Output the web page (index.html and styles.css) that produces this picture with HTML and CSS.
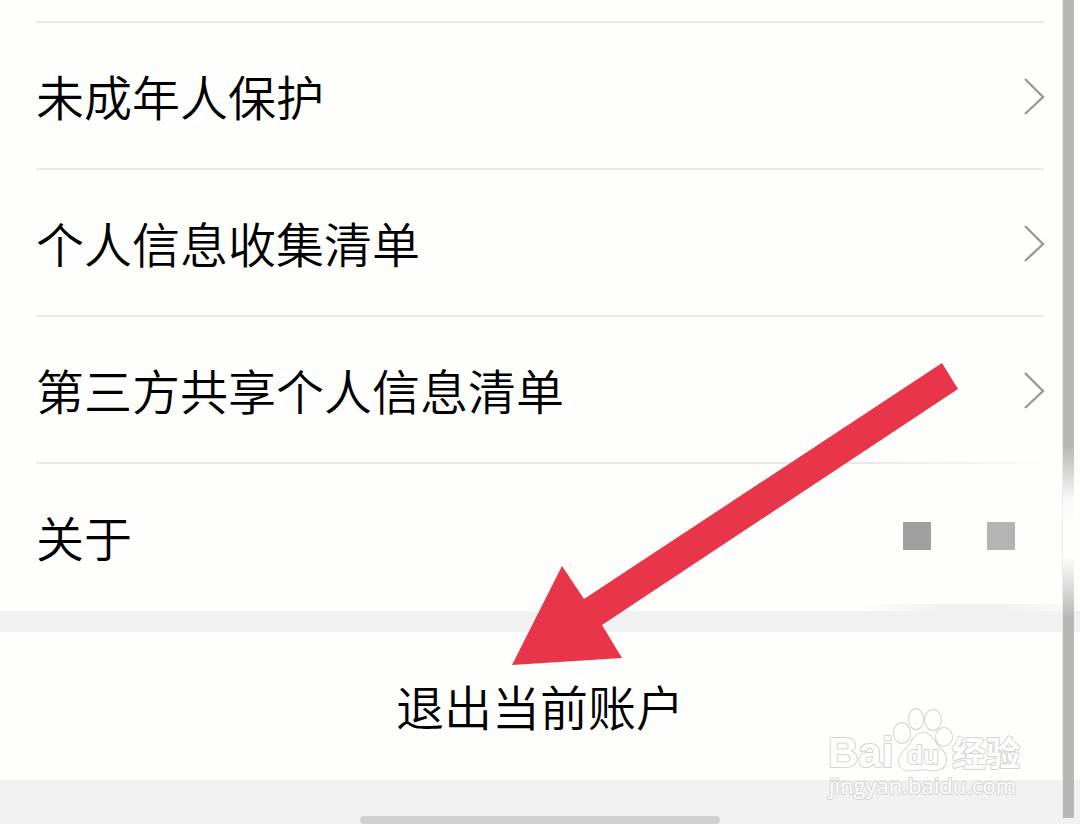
FILE: index.html
```
<!DOCTYPE html>
<html lang="zh-CN">
<head>
    <meta charset="UTF-8">
    <meta name="viewport" content="width=device-width, initial-scale=1">
    <title>设置</title>
    <link rel="stylesheet" href="styles.css">
</head>
<body>
    <div class="page">
        <ul class="list">
            <li>
                <a class="row" href="#">
                    <span>未成年人保护</span>
                    <svg class="arrow" viewBox="0 0 20 38"><path d="M1 3L19 21L1 38"/></svg>
                </a>
            </li>
            <li>
                <a class="row" href="#">
                    <span>个人信息收集清单</span>
                    <svg class="arrow" viewBox="0 0 20 38"><path d="M1 3L19 21L1 38"/></svg>
                </a>
            </li>
            <li>
                <a class="row" href="#">
                    <span>第三方共享个人信息清单</span>
                    <svg class="arrow" viewBox="0 0 20 38"><path d="M1 3L19 21L1 38"/></svg>
                </a>
            </li>
            <li>
                <a class="row" href="#">
                    <span>关于</span>
                    <span class="dots"><i></i><i></i></span>
                </a>
            </li>
        </ul>
        <button class="logout" type="button">退出当前账户</button>
        <div class="home_bar"></div>

        <div class="scrollbar"></div>
        <div class="fade_line"></div>
        <div class="fade_band"></div>

        <svg class="pointer" viewBox="0 0 446 302">
            <path d="M430 0L446 26L90 262L110 295L0 302L50 203L72 236Z"/>
        </svg>

        <svg class="watermark" viewBox="0 0 200 96">
            <g class="logo">
                <text class="latin" x="2" y="61">Bai</text>
                <ellipse cx="76" cy="27" rx="8" ry="10"/>
                <ellipse cx="90" cy="13" rx="7" ry="10"/>
                <ellipse cx="107" cy="14" rx="8" ry="10"/>
                <ellipse cx="118" cy="31" rx="8" ry="9"/>
                <path d="M97 27C89 27 87 35 82 41C77 46 73 50 73 56C74 65 83 65 89 64C95 63 99 63 105 64C112 65 119 63 120 55C121 48 116 45 112 40C107 34 105 27 97 27Z"/>
                <text class="du" x="81" y="58">du</text>
                <text class="cn" x="126" y="60">经验</text>
                <text class="site" x="3" y="88">jingyan.baidu.com</text>
            </g>
        </svg>
    </div>
</body>
</html>
```
FILE: styles.css
```
*{
    margin:0;
    padding:0;
    box-sizing:border-box;
}
body{
    background-color:#f1f1f1;
    font-family:"Noto Sans CJK SC",sans-serif;
    font-size:48px;
    font-weight:350;
    color:#000;
}
.page{
    position:relative;
    min-height:100vh;
    display:flex;
    flex-direction:column;
    overflow:hidden;
}
.list{
    list-style:none;
    padding:21px 36px 2px;
    background-color:#fefefd;
}
.row{
    display:flex;
    align-items:center;
    justify-content:space-between;
    height:147px;
    padding-bottom:2px;
    border-top:2px solid #e9e9e9;
    color:#000;
    text-decoration:none;
}
.arrow{
    width:20px;
    height:38px;
    overflow:visible;
    fill:none;
    stroke:#999;
    stroke-width:2.4;
}
.dots{
    display:flex;
    gap:56px;
    margin-right:29px;
}
.dots i{
    width:28px;
    height:28px;
    background-color:#a0a0a0;
}
.dots i:last-child{
    background-color:#b4b4b4;
}
.logout{
    height:148px;
    margin-top:21px;
    padding-bottom:2px;
    border:none;
    background-color:#fefefd;
    color:#000;
    font:inherit;
    cursor:pointer;
}
.home_bar{
    width:360px;
    height:8px;
    margin:auto auto 0;
    border-radius:4px;
    background-color:#d1d1d1;
}
.scrollbar{
    position:absolute;
    top:0;
    right:6px;
    bottom:6px;
    width:12px;
    border-left:1px solid #ebebeb;
    background:linear-gradient(#b7b7b5 445px,#d4d4d3 470px,#fafafa 500px,#fefefd 530px,#fefefd 555px,#e4e4e4 580px,#b7b7b5 618px);
}
/* 右下角悬浮遮罩 */
.fade_line{
    position:absolute;
    top:462px;
    right:36px;
    width:180px;
    height:3px;
    background:linear-gradient(to right,rgba(254,254,253,0),rgba(254,254,253,0.8));
}
.fade_band{
    position:absolute;
    top:604px;
    right:18px;
    width:200px;
    height:8px;
    background:linear-gradient(to right,rgba(241,241,241,0),#f1f1f1 40%,#f1f1f1 70%,rgba(241,241,241,0.4));
}
.pointer{
    position:absolute;
    top:363px;
    left:512px;
    width:446px;
    height:302px;
    fill:#e93549;
}
.watermark{
    position:absolute;
    right:54px;
    bottom:22px;
    width:200px;
    height:96px;
}
.logo{
    fill:#fefefd;
    stroke:#d4d4d4;
    stroke-width:2;
    stroke-linejoin:round;
    paint-order:stroke;
}
.logo .latin{
    font:bold 42px "Liberation Sans",sans-serif;
}
.logo .du{
    font:bold 26px "Liberation Sans",sans-serif;
}
.logo .cn{
    font:bold 34px "Noto Sans CJK SC",sans-serif;
}
.logo .site{
    font:22px "Open Sans",sans-serif;
}
```
